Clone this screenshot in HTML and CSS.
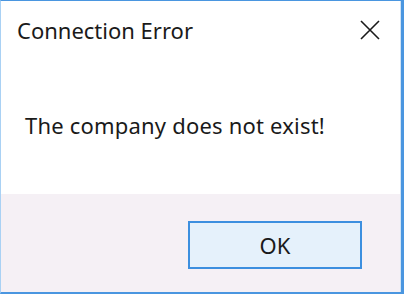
FILE: index.html
```html
<!DOCTYPE html>
<html>
<head>
<meta charset="utf-8">
<link rel="stylesheet" href="styles.css">
</head>
<body>
<div class="dialog">
  <div class="main">
    <div class="titlebar">
      <span class="title">Connection Error</span>
      <button class="close" aria-label="Close">
        <svg width="20" height="20" viewBox="0 0 20 20"><path d="M1 1 L19 19 M19 1 L1 19" stroke="#1a1a1a" stroke-width="1.6" fill="none"/></svg>
      </button>
    </div>
    <div class="message">The company does not exist!</div>
  </div>
  <div class="footer">
    <button class="ok">OK</button>
  </div>
</div>
</body>
</html>
```
FILE: styles.css
```css
html, body {
  margin: 0;
  padding: 0;
  background: #ffffff;
}
.dialog {
  width: 404px;
  height: 294px;
  box-sizing: border-box;
  border-top: 1px solid #4a96e0;
  border-left: 1px solid #a9d1f4;
  border-right: 3px solid #4a96e0;
  border-bottom: 2px solid #4a96e0;
  display: flex;
  flex-direction: column;
  font-family: "Noto Sans", "Open Sans", sans-serif;
  color: #1a1a1a;
}
.main {
  height: 193px;
  background: #ffffff;
  box-shadow: inset -1px 0 0 #cfe3f6;
}
.titlebar {
  height: 57px;
  display: flex;
  align-items: center;
  justify-content: space-between;
  padding-left: 16px;
  padding-right: 21px;
}
.title {
  font-size: 22px;
}
.close {
  border: none;
  background: none;
  padding: 0;
  width: 20px;
  height: 20px;
  display: flex;
}
.message {
  font-size: 22px;
  letter-spacing: 0.2px;
  padding-left: 24px;
  padding-top: 52px;
}
.footer {
  flex: 1;
  background: #f5f0f5;
  box-shadow: inset -1px 0 0 #cfe3f6;
  display: flex;
  justify-content: flex-end;
  align-items: flex-start;
  padding-top: 27px;
  padding-right: 39px;
}
.ok {
  width: 174px;
  height: 48px;
  box-sizing: border-box;
  border: 2px solid #3c8fdf;
  background: #e5f1fb;
  font-family: "Noto Sans", "Open Sans", sans-serif;
  font-size: 22px;
  color: #1a1a1a;
  padding: 0;
}
```
